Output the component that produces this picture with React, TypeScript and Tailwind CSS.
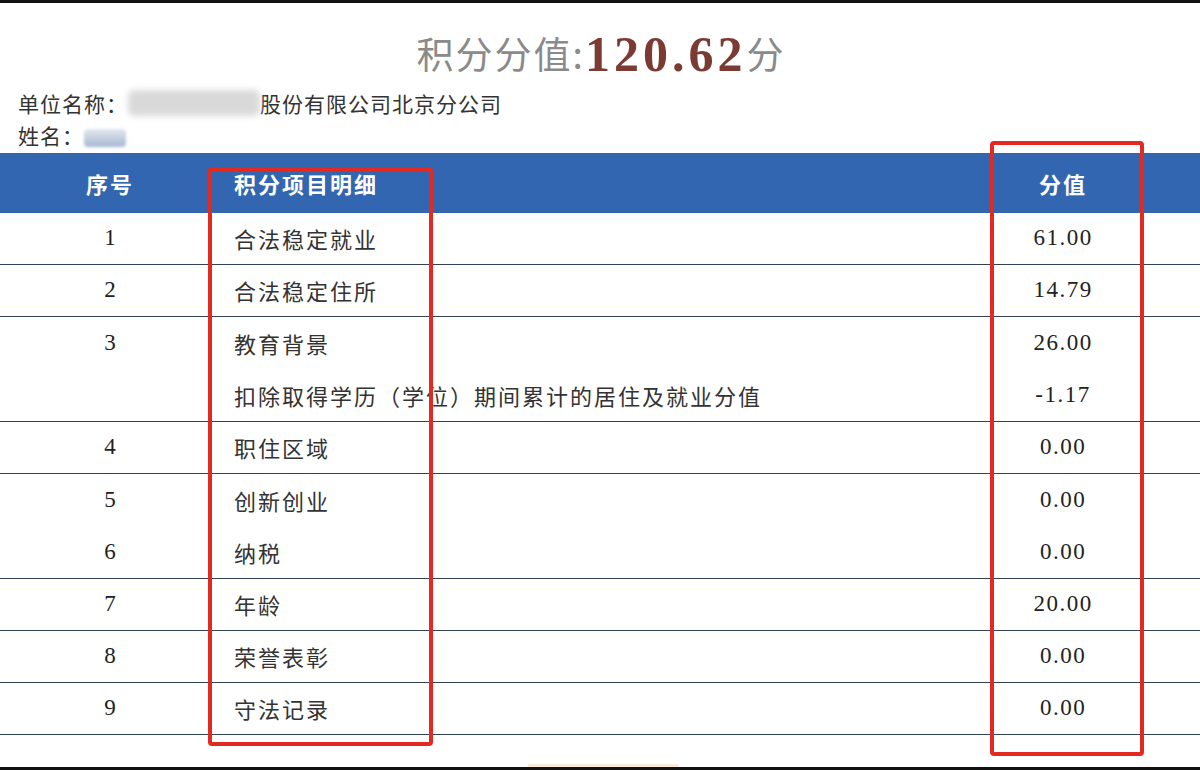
import React from "react";

type Row = { no: string; name: string; value: string };

// 每组之间才有分隔线（3 与扣除项同组，5 与 6 同组）
const GROUPS: Row[][] = [
    [{ no: "1", name: "合法稳定就业", value: "61.00" }],
    [{ no: "2", name: "合法稳定住所", value: "14.79" }],
    [
        { no: "3", name: "教育背景", value: "26.00" },
        { no: "", name: "扣除取得学历（学位）期间累计的居住及就业分值", value: "-1.17" },
    ],
    [{ no: "4", name: "职住区域", value: "0.00" }],
    [
        { no: "5", name: "创新创业", value: "0.00" },
        { no: "6", name: "纳税", value: "0.00" },
    ],
    [{ no: "7", name: "年龄", value: "20.00" }],
    [{ no: "8", name: "荣誉表彰", value: "0.00" }],
    [{ no: "9", name: "守法记录", value: "0.00" }],
];

const cjk = "font-['Noto_Sans_CJK_SC',sans-serif]";
const num = "font-['Liberation_Serif','Noto_Sans_CJK_SC',serif]";

const App = () => {
    return (
        <div className="relative w-[1200px] h-[770px] bg-white flex flex-col overflow-hidden">
            <div className="h-[3px] bg-[#111]"></div>

            {/* 标题 */}
            <div className="h-[84px] flex items-center justify-center pt-[18px]">
                <span className={`${cjk} text-[37px] tracking-[2px] text-[#8a8a8a]`}>积分分值:</span>
                <span className={`${num} text-[50px] font-bold tracking-[4px] text-[#7b3a32] leading-none`}>120.62</span>
                <span className={`${cjk} text-[37px] text-[#8a8a8a]`}>分</span>
            </div>

            {/* 单位、姓名 */}
            <div className={`${cjk} text-[21px] tracking-[1px] text-[#333] pl-[18px] leading-[32px]`}>
                <div className="flex items-center">
                    <span>单位名称：</span>
                    <span className="inline-block w-[132px] h-[26px] bg-[#d9d9d9] blur-[3px] rounded-md"></span>
                    <span>股份有限公司北京分公司</span>
                </div>
                <div className="flex items-center">
                    <span>姓名：</span>
                    <span className="inline-block w-[42px] h-[18px] bg-gradient-to-b from-[#e4e8ef] to-[#a6b8d2] blur-[1.5px] rounded-sm mt-[6px]"></span>
                </div>
            </div>

            {/* 表格 */}
            <div className="mt-[2px]">
                <div className={`${cjk} grid grid-cols-[220px_1fr_274px] h-[60px] bg-[#3366b0] text-white font-bold text-[22px] tracking-[2px] items-center`}>
                    <div className="text-center">序号</div>
                    <div className="pl-[14px]">积分项目明细</div>
                    <div className="text-center">分值</div>
                </div>

                {GROUPS.map((group, gi) => (
                    <div
                        key={gi}
                        className={`flex flex-col border-b border-[#2f4456] ${group.length > 1 ? "h-[105px]" : "h-[52px]"}`}
                    >
                        {group.map((row, ri) => (
                            <div key={ri} className="flex-1 grid grid-cols-[220px_1fr_274px] items-center">
                                <div className={`${num} text-center text-[23px] text-[#222]`}>{row.no}</div>
                                <div className={`${cjk} pl-[14px] text-[22px] tracking-[2px] text-[#333]`}>{row.name}</div>
                                <div className={`${num} text-center text-[23px] tracking-[1.5px] text-[#222]`}>{row.value}</div>
                            </div>
                        ))}
                    </div>
                ))}
            </div>

            <div className="flex-1"></div>
            <div className="relative h-[3px] bg-[#111]">
                <div className="absolute left-[528px] -top-[3px] w-[150px] h-[3px] bg-[#fbe9da]"></div>
            </div>

            {/* 红色标注框 */}
            <div className="absolute left-[208px] top-[167px] w-[225px] h-[579px] border-[4px] border-[#e32a20] rounded-[4px] pointer-events-none"></div>
            <div className="absolute left-[990px] top-[141px] w-[154px] h-[615px] border-[4px] border-[#e32a20] rounded-[4px] pointer-events-none"></div>
        </div>
    );
};

export default App;
